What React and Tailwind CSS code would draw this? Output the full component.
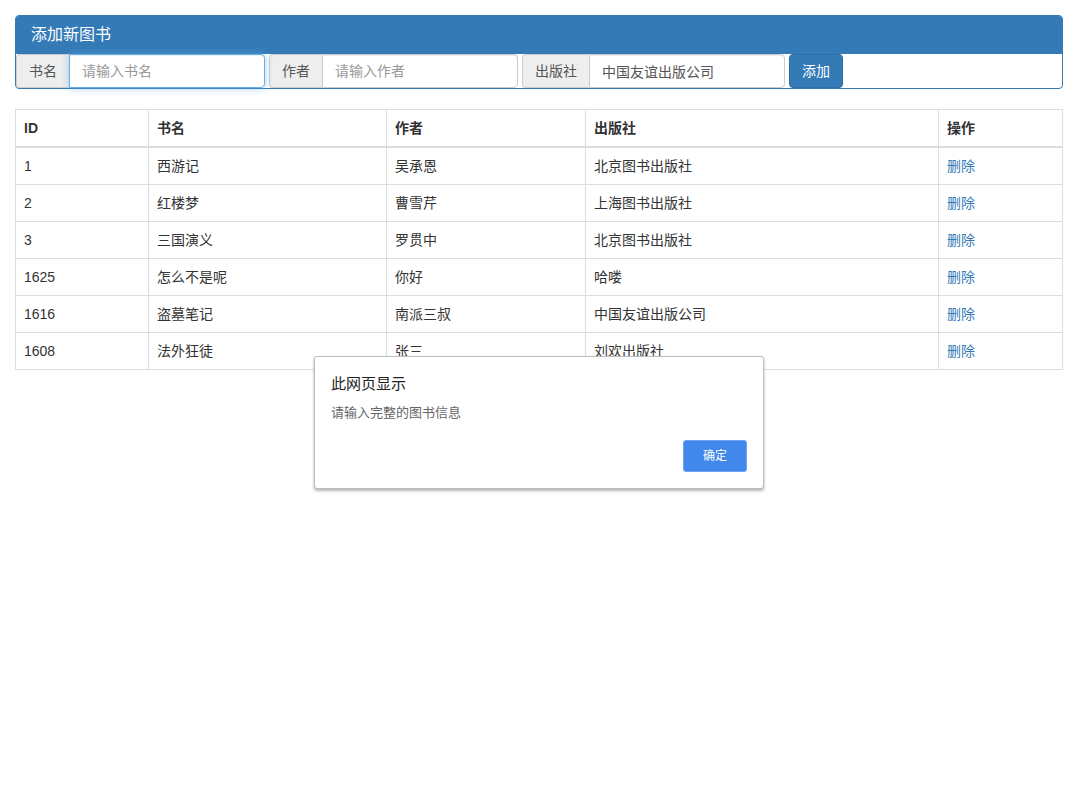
const FONT = "font-['Liberation_Sans','Noto_Sans_CJK_SC',sans-serif]";

const rows = [
  ["1", "西游记", "吴承恩", "北京图书出版社"],
  ["2", "红楼梦", "曹雪芹", "上海图书出版社"],
  ["3", "三国演义", "罗贯中", "北京图书出版社"],
  ["1625", "怎么不是呢", "你好", "哈喽"],
  ["1616", "盗墓笔记", "南派三叔", "中国友谊出版公司"],
  ["1608", "法外狂徒", "张三", "刘欢出版社"],
];

function Field({ label, placeholder, value, addonW, inputW, focused }) {
  return (
    <div className="flex h-[34px]">
      <span
        className={`flex items-center justify-center shrink-0 bg-[#eeeeee] border border-[#cccccc] border-r-0 rounded-l-[4px] text-[14px] text-[#555555] ${addonW}`}
      >
        {label}
      </span>
      <input
        readOnly
        placeholder={placeholder}
        value={value}
        className={`h-[34px] px-3 bg-white border rounded-r-[4px] text-[14px] text-[#555555] placeholder:text-[#999999] outline-none ${inputW} ${
          focused
            ? "border-[#66afe9] shadow-[inset_0_1px_1px_rgba(0,0,0,0.075),0_0_8px_rgba(102,175,233,0.6)] relative"
            : "border-[#cccccc] shadow-[inset_0_1px_1px_rgba(0,0,0,0.075)]"
        }`}
      />
    </div>
  );
}

export default function App() {
  return (
    <div className={`relative min-h-[805px] bg-white p-[15px] text-[14px] text-[#333333] ${FONT}`}>
      <section className="border border-[#337ab7] rounded-[4px] bg-white">
        <h3 className="h-[38px] px-[15px] flex items-center bg-[#337ab7] text-white text-[16px] font-normal rounded-t-[3px]">
          添加新图书
        </h3>
        <div className="flex gap-1 h-[34px]">
          <Field label="书名" placeholder="请输入书名" value="" addonW="w-[53px]" inputW="w-[196px]" focused />
          <Field label="作者" placeholder="请输入作者" value="" addonW="w-[53px]" inputW="w-[196px]" />
          <Field label="出版社" placeholder="" value="中国友谊出版公司" addonW="w-[67px]" inputW="w-[196px]" />
          <button className="w-[54px] h-[34px] bg-[#337ab7] border border-[#2e6da4] rounded-[4px] text-white text-[14px]">
            添加
          </button>
        </div>
      </section>

      <table className="mt-5 w-[1047px] table-fixed border-collapse">
        <colgroup>
          <col className="w-[133px]" />
          <col className="w-[238px]" />
          <col className="w-[199px]" />
          <col className="w-[353px]" />
          <col className="w-[124px]" />
        </colgroup>
        <thead>
          <tr className="h-[37px]">
            {["ID", "书名", "作者", "出版社", "操作"].map((h) => (
              <th key={h} className="border border-[#dddddd] border-b-2 px-2 pt-[2px] text-left font-bold text-[14px]">
                {h}
              </th>
            ))}
          </tr>
        </thead>
        <tbody>
          {rows.map((r, n) => (
            <tr key={r[0]} className={n === 0 ? "h-[38px]" : "h-[37px]"}>
              {r.map((c, i) => (
                <td key={i} className={`border border-[#dddddd] px-2 ${n === 0 ? "pt-[2px]" : ""}`}>
                  {c}
                </td>
              ))}
              <td className={`border border-[#dddddd] px-2 ${n === 0 ? "pt-[2px]" : ""}`}>
                <a href="#" className="text-[#337ab7]">
                  删除
                </a>
              </td>
            </tr>
          ))}
        </tbody>
      </table>

      <div
        role="dialog"
        className="absolute left-[314px] top-[356px] w-[450px] h-[133px] bg-white border border-[#bdbdbd] rounded-[3px] shadow-[0_2px_3px_rgba(0,0,0,0.3)] pt-[17px] px-[16px]"
      >
        <div className="text-[15px] leading-[20px] text-[#222222]">此网页显示</div>
        <div className="mt-[10px] text-[13px] leading-[18px] text-[#666666]">请输入完整的图书信息</div>
        <div className="mt-[18px] flex justify-end">
          <button className="w-[64px] h-[32px] bg-[#4287ec] border border-[#6ea3f0] rounded-[3px] text-white text-[12px]">
            确定
          </button>
        </div>
      </div>
    </div>
  );
}
